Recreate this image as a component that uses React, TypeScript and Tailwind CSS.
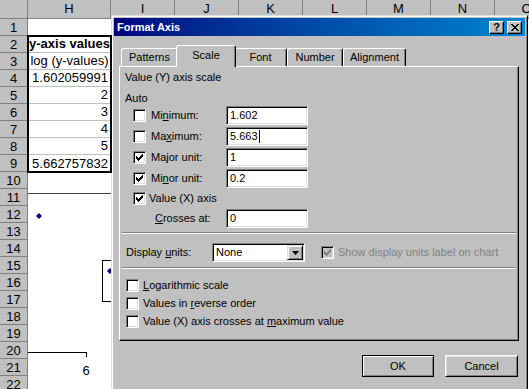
import React from "react";

const CHECK = ["......#", ".....##", "#...###", "##.###.", "#####..", ".###...", "..#...."];
const CLOSE = ["##....##", ".##..##.", "..####..", "...##...", "..####..", ".##..##.", "##....##"];

const COLS = ["I", "J", "K", "L", "M", "N", "O"];
const ROWS = Array.from({ length: 22 }, (_, i) => i + 1);
const VALUES = ["1.602059991", "2", "3", "4", "5", "5.662757832"];

function Pixels({ rows, color, x, y }: { rows: string[]; color: string; x: number; y: number }) {
  return (
    <>
      {rows.flatMap((r, j) =>
        r.split("").map((c, i) =>
          c === "#" ? <rect key={`${i}-${j}`} x={x + i} y={y + j} width={1} height={1} fill={color} /> : null
        )
      )}
    </>
  );
}

function Box({ on, off }: { on?: boolean; off?: boolean }) {
  return (
    <span
      className={`block w-[13px] h-[13px] shrink-0 border border-t-[#808080] border-l-[#808080] border-r-white border-b-white shadow-[inset_1px_1px_0_#000,inset_-1px_-1px_0_#dfdfdf] ${
        off ? "bg-[#c0c0c0]" : "bg-white"
      }`}
    >
      {on && (
        <svg width="11" height="11" className="block">
          <Pixels rows={CHECK} color={off ? "#808080" : "#000"} x={2} y={2} />
        </svg>
      )}
    </span>
  );
}

function Field({ children }: { children?: React.ReactNode }) {
  return (
    <div className="w-[82px] h-[19px] bg-white border border-t-[#808080] border-l-[#808080] border-r-white border-b-white shadow-[inset_1px_1px_0_#000,inset_-1px_-1px_0_#dfdfdf] pl-[3px] flex items-center">
      {children}
    </div>
  );
}

function Tab({ label, w, active }: { label: string; w: string; active?: boolean }) {
  return (
    <div
      className={`${w} shrink-0 flex items-center justify-center bg-[#c0c0c0] border-t border-l border-r border-t-white border-l-white border-r-black rounded-t-[3px] shadow-[inset_-1px_0_0_#808080] ${
        active ? "relative z-10 h-[22px] -mx-[2px] -mb-[1px] pb-[2px]" : "h-[18px]"
      }`}
    >
      {label}
    </div>
  );
}

function Button({ label, primary, w }: { label: string; primary?: boolean; w: string }) {
  return (
    <div
      className={`${w} h-[22px] flex items-center justify-center bg-[#c0c0c0] border ${
        primary
          ? "border-black shadow-[inset_1px_1px_0_#fff,inset_-1px_-1px_0_#808080]"
          : "border-t-white border-l-white border-r-black border-b-black shadow-[inset_1px_1px_0_#dfdfdf,inset_-1px_-1px_0_#808080]"
      }`}
    >
      {label}
    </div>
  );
}

function FormatAxisDialog() {
  return (
    <div className="absolute left-[111px] top-[15px] w-[417px] h-[380px] bg-[#c0c0c0] border border-t-[#dfdfdf] border-l-[#dfdfdf] border-r-black border-b-black shadow-[inset_1px_1px_0_#fff,inset_-1px_-1px_0_#808080] p-[2px] text-[11px] leading-[13px] text-black">
      {/* Title bar */}
      <div className="h-[18px] flex items-center bg-linear-to-r from-[#000080] to-[#1084d0] pl-[3px] pr-[3px]">
        <span className="flex-1 text-white font-bold">Format Axis</span>
        <div className="w-[15px] h-[13px] flex items-center justify-center bg-[#c0c0c0] border border-t-white border-l-white border-r-black border-b-black shadow-[inset_-1px_-1px_0_#808080] font-bold text-[11px] leading-none">
          ?
        </div>
        <div className="ml-[3px] w-[15px] h-[13px] flex items-center justify-center bg-[#c0c0c0] border border-t-white border-l-white border-r-black border-b-black shadow-[inset_-1px_-1px_0_#808080]">
          <svg width="8" height="7" className="block">
            <Pixels rows={CLOSE} color="#000" x={0} y={0} />
          </svg>
        </div>
      </div>

      <div className="pl-[5px] pt-[9px]">
        {/* Tabs */}
        <div className="flex items-end h-[21px] pl-[2px]">
          <Tab label="Patterns" w="w-[57px]" />
          <Tab label="Scale" w="w-[60px]" active />
          <Tab label="Font" w="w-[53px]" />
          <Tab label="Number" w="w-[56px]" />
          <Tab label="Alignment" w="w-[63px]" />
        </div>

        {/* Panel */}
        <div className="w-[400px] h-[275px] border border-t-white border-l-white border-r-black border-b-black shadow-[inset_-1px_-1px_0_#808080] pt-[3px]">
          <div className="h-[14px] pl-[5px] flex items-center">Value (Y) axis scale</div>
          <div className="h-[14px] mt-[7px] pl-[5px] flex items-center">Auto</div>

          <div className="h-[21px] flex items-center pl-[13px]">
            <Box />
            <span className="ml-[5px] w-[75px]">
              Mi<u>n</u>imum:
            </span>
            <Field>1.602</Field>
          </div>
          <div className="h-[21px] flex items-center pl-[13px]">
            <Box />
            <span className="ml-[5px] w-[75px]">
              Ma<u>x</u>imum:
            </span>
            <Field>
              5.663<span className="ml-[1px] w-px h-[13px] bg-black" />
            </Field>
          </div>
          <div className="h-[21px] flex items-center pl-[13px]">
            <Box on />
            <span className="ml-[5px] w-[75px]">
              Ma<u>j</u>or unit:
            </span>
            <Field>1</Field>
          </div>
          <div className="h-[21px] flex items-center pl-[13px]">
            <Box on />
            <span className="ml-[5px] w-[75px]">
              Mi<u>n</u>or unit:
            </span>
            <Field>0.2</Field>
          </div>
          <div className="h-[19px] flex items-center pl-[13px]">
            <Box on />
            <span className="ml-[3px]">Value (X) axis</span>
          </div>
          <div className="h-[21px] flex items-center pl-[35px]">
            <span className="w-[71px]">
              <u>C</u>rosses at:
            </span>
            <Field>0</Field>
          </div>

          <div className="mt-[3px] mx-[2px] border-t border-b border-t-[#808080] border-b-white" />

          <div className="mt-[9px] h-[19px] flex items-center pl-[6px]">
            <span className="w-[86px]">
              Display <u>u</u>nits:
            </span>
            <div className="w-[93px] h-[19px] bg-white border border-t-[#808080] border-l-[#808080] border-r-white border-b-white shadow-[inset_1px_1px_0_#000,inset_-1px_-1px_0_#dfdfdf] flex items-center pr-[1px]">
              <span className="flex-1 pl-[3px]">None</span>
              <span className="w-[16px] h-[15px] flex items-center justify-center bg-[#c0c0c0] border border-t-[#dfdfdf] border-l-[#dfdfdf] border-r-black border-b-black shadow-[inset_1px_1px_0_#fff,inset_-1px_-1px_0_#808080]">
                <svg width="7" height="4" className="block">
                  <path d="M0 0h7L3.5 4z" fill="#000" />
                </svg>
              </span>
            </div>
            <span className="ml-[16px]">
              <Box on off />
            </span>
            <span className="ml-[4px] text-[#808080]">Show display units label on chart</span>
          </div>

          <div className="mt-[5px] mx-[2px] border-t border-b border-t-[#808080] border-b-white" />

          <div className="mt-[7px] h-[18px] flex items-center pl-[6px]">
            <Box />
            <span className="ml-[4px]">
              <u>L</u>ogarithmic scale
            </span>
          </div>
          <div className="h-[18px] flex items-center pl-[6px]">
            <Box />
            <span className="ml-[4px]">
              Values in <u>r</u>everse order
            </span>
          </div>
          <div className="h-[18px] flex items-center pl-[6px]">
            <Box />
            <span className="ml-[4px]">
              Value (X) axis crosses at <u>m</u>aximum value
            </span>
          </div>
        </div>

        {/* Buttons */}
        <div className="mt-[14px] flex justify-end gap-[11px] pr-[7px]">
          <Button label="OK" primary w="w-[72px]" />
          <Button label="Cancel" w="w-[73px]" />
        </div>
      </div>
    </div>
  );
}

export default function App() {
  return (
    <div className="relative w-[529px] h-[389px] overflow-hidden bg-white text-black font-['Liberation_Sans',Arial,sans-serif]">
      {/* Column headers */}
      <div className="flex h-[19px] text-[13px]">
        <div className="w-[28px] shrink-0 bg-[#c0c0c0] border-r border-b border-[#808080]" />
        <div className="w-[83px] shrink-0 bg-[#c0c0c0] border-r border-b border-[#808080] flex items-center justify-center">
          H
        </div>
        {COLS.map((c) => (
          <div
            key={c}
            className="w-[64px] shrink-0 bg-[#c0c0c0] border-r border-b border-[#808080] flex items-center justify-center"
          >
            {c}
          </div>
        ))}
      </div>

      <div className="flex text-[13px]">
        {/* Row headers */}
        <div className="w-[28px] shrink-0 flex flex-col">
          {ROWS.map((r) => (
            <div
              key={r}
              className="h-[17px] shrink-0 bg-[#c0c0c0] border-r border-b border-[#808080] flex items-center justify-center leading-none"
            >
              {r}
            </div>
          ))}
        </div>

        {/* Column H */}
        <div className="w-[83px] shrink-0 flex flex-col">
          <div className="h-[17px]" />
          <div className="relative z-10 bg-white outline-2 outline-black outline-offset-[-1px]">
            <div className="h-[17px] border-b border-[#c0c0c0] flex items-center justify-center font-bold whitespace-nowrap overflow-hidden">
              y-axis values
            </div>
            <div className="h-[17px] border-b border-[#c0c0c0] flex items-center justify-center whitespace-nowrap">
              log (y-values)
            </div>
            {VALUES.map((v, i) => (
              <div
                key={i}
                className={`h-[17px] flex items-center justify-end pr-[3px] ${
                  i < VALUES.length - 1 ? "border-b border-[#c0c0c0]" : ""
                }`}
              >
                {v}
              </div>
            ))}
          </div>
          <div className="h-[17px]" />
          {/* embedded chart */}
          <svg width="83" height="200" className="block">
            <line x1="0" y1="4.5" x2="83" y2="4.5" stroke="#404040" strokeWidth="1" />
            <polygon points="11,24 14,27 11,30 8,27" fill="#000080" />
            <rect x="74.5" y="71.5" width="30" height="41" fill="none" stroke="#000" strokeWidth="1" />
            <polygon points="82,79 85,82 82,85 79,82" fill="#000080" />
            <line x1="0" y1="163.5" x2="58" y2="163.5" stroke="#000" strokeWidth="1" />
            <line x1="58.5" y1="163" x2="58.5" y2="168" stroke="#000" strokeWidth="1" />
            <text x="58" y="186" textAnchor="middle" fontSize="13" fontFamily="Liberation Sans, Arial, sans-serif">
              6
            </text>
          </svg>
        </div>

        <div className="flex-1" />
      </div>

      <FormatAxisDialog />
    </div>
  );
}
